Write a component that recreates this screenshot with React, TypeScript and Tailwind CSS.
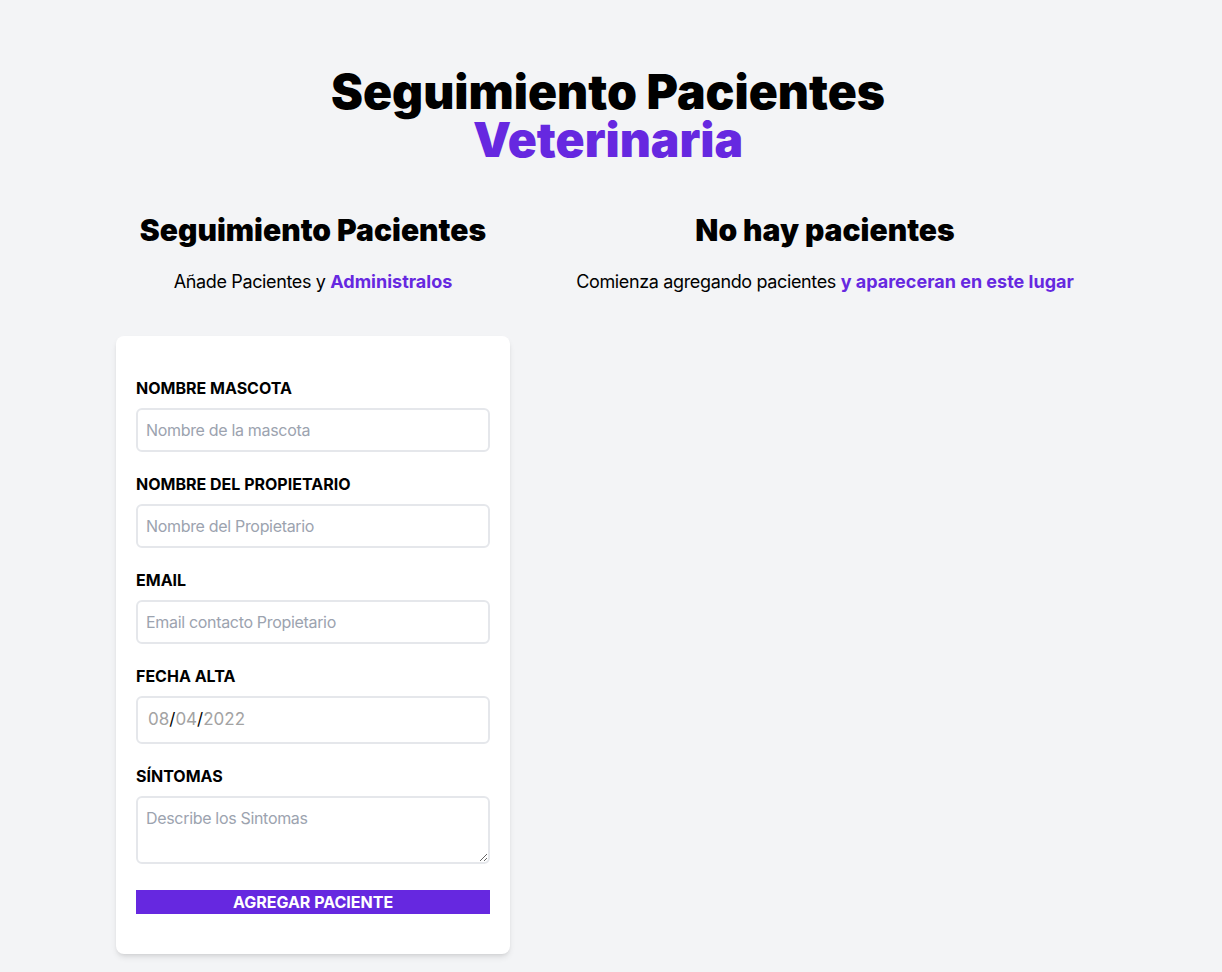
import React from "react";

const purple = "text-[#6628e0]";

function Field({ label, placeholder }: { label: string; placeholder: string }) {
  return (
    <div className="mb-5">
      <label className="block text-black uppercase font-bold">{label}</label>
      <input
        type="text"
        placeholder={placeholder}
        className="border-2 border-[#e5e7eb] w-full p-2 mt-2 placeholder-[#9ca3af] rounded-md outline-none text-base tracking-[-0.02em]"
      />
    </div>
  );
}

export default function App() {
  return (
    <div className="min-h-screen bg-[#f3f4f6] font-['Inter',sans-serif] pr-[6px] pt-[68px]">
      <h1 className="font-black text-5xl leading-none text-center mx-auto text-black">
        Seguimiento Pacientes <span className={`block ${purple}`}>Veterinaria</span>
      </h1>
      <div className="w-[1024px] mx-auto mt-12 flex">
        <div className="w-[394px] ml-5">
          <h2 className="font-black text-3xl text-center">Seguimiento Pacientes</h2>
          <p className="text-lg mt-5 text-center mb-10">
            <span className="tracking-[-0.02em]">Añade Pacientes y </span>
            <span className={`${purple} font-bold`}>Administralos</span>
          </p>
          <form className="bg-white shadow-md rounded-lg py-10 px-5">
            <Field label="Nombre Mascota" placeholder="Nombre de la mascota" />
            <Field label="Nombre del Propietario" placeholder="Nombre del Propietario" />
            <Field label="Email" placeholder="Email contacto Propietario" />
            <div className="mb-5">
              <label className="block text-black uppercase font-bold">Fecha Alta</label>
              <div className="border-2 border-[#e5e7eb] w-full mt-2 rounded-md h-[48px] flex items-center pl-[10px] text-[17px] text-[#a3a3a3]">
                <span>08</span>
                <span className="text-black">/</span>
                <span>04</span>
                <span className="text-black">/</span>
                <span>2022</span>
              </div>
            </div>
            <div className="mb-5">
              <label className="block text-black uppercase font-bold">Síntomas</label>
              <textarea
                placeholder="Describe los Sintomas"
                rows={2}
                className="border-2 border-[#e5e7eb] w-full p-2 mt-2 placeholder-[#9ca3af] rounded-md outline-none text-base tracking-[-0.02em]"
              />
            </div>
            <button
              type="button"
              className="bg-[#6628e0] w-full text-white uppercase font-bold leading-6 block"
            >
              Agregar Paciente
            </button>
          </form>
        </div>
        <div className="flex-1 ml-5">
          <h2 className="font-black text-3xl text-center">No hay pacientes</h2>
          <p className="text-lg mt-5 text-center mb-10">
            <span className="tracking-[-0.02em]">Comienza agregando pacientes </span>
            <span className={`${purple} font-bold`}>y apareceran en este lugar</span>
          </p>
        </div>
      </div>
    </div>
  );
}
